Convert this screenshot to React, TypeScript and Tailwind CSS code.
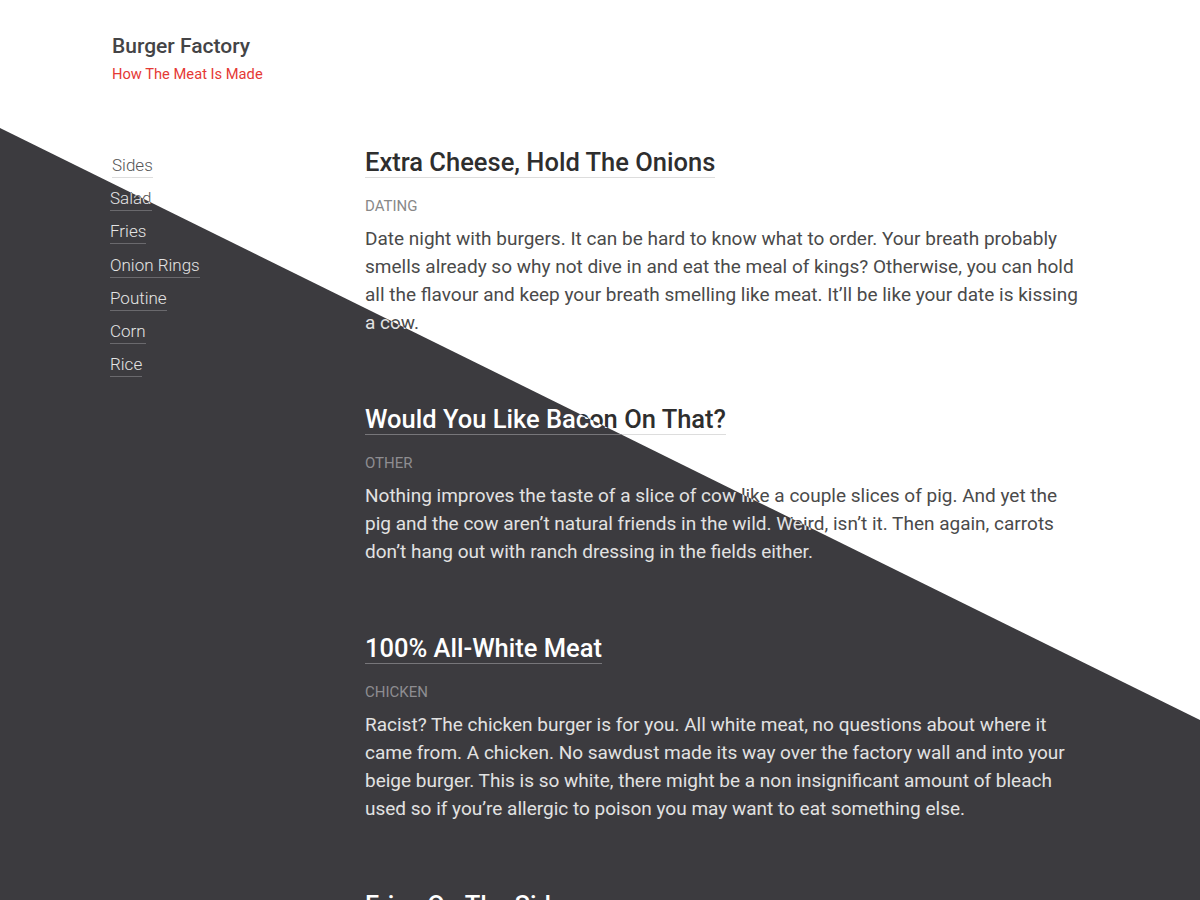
const nav = ["Sides", "Salad", "Fries", "Onion Rings", "Poutine", "Corn", "Rice"];

const posts = [
    {
        title: "Extra Cheese, Hold The Onions",
        tag: "Dating",
        body: "Date night with burgers. It can be hard to know what to order. Your breath probably smells already so why not dive in and eat the meal of kings? Otherwise, you can hold all the flavour and keep your breath smelling like meat. It\u2019ll be like your date is kissing a cow.",
    },
    {
        title: "Would You Like Bacon On That?",
        tag: "Other",
        body: "Nothing improves the taste of a slice of cow like a couple slices of pig. And yet the pig and the cow aren\u2019t natural friends in the wild. Weird, isn\u2019t it. Then again, carrots don\u2019t hang out with ranch dressing in the fields either.",
    },
    {
        title: "100% All-White Meat",
        tag: "Chicken",
        body: "Racist? The chicken burger is for you. All white meat, no questions about where it came from. A chicken. No sawdust made its way over the factory wall and into your beige burger. This is so white, there might be a non insignificant amount of bleach used so if you\u2019re allergic to poison you may want to eat something else.",
    },
    {
        title: "Fries On The Side",
        tag: "Sides",
        body: "Every burger deserves a friend. Fries are that friend.",
    },
];

const Page = ({dark}: {dark: boolean}) => {
    return (
        <div className="flex flex-col px-[110px] pt-[33px]">
            <div className="flex flex-col pl-[2px]">
                <h1 className={`text-[21px] leading-[26px] font-medium ${dark ? "text-white" : "text-[#444446]"}`}>
                    Burger Factory
                </h1>
                <p className="text-[14.7px] leading-[20px] mt-[5px] text-[#e53935]">How The Meat Is Made</p>
            </div>
            <div className="flex flex-row mt-[63px]">
                <ul className="flex flex-col w-[255px] shrink-0 pt-[7px] gap-[9.2px]">
                    {nav.map((item, i) => (
                        <li key={item}>
                            <a
                                className={`inline-block text-[17px] leading-[23px] font-light border-b ${i === 0 ? "ml-[2px]" : ""} ${
                                    dark ? "text-[#e4e4e4] border-[#6a696d]" : "text-[#555] border-[#ddd]"
                                }`}
                            >
                                {item}
                            </a>
                        </li>
                    ))}
                </ul>
                <div className="flex flex-col w-[720px] gap-[67px]">
                    {posts.map((post) => (
                        <article key={post.title} className="flex flex-col items-start">
                            <h2
                                className={`text-[25.5px] leading-[30px] font-medium border-b ${
                                    dark ? "text-white border-[#77767a]" : "text-[#2e2e2e] border-[#ddd]"
                                }`}
                            >
                                {post.title}
                            </h2>
                            <span className={`mt-[18px] text-[15px] leading-[20px] uppercase ${dark ? "text-[#8e8d91]" : "text-[#888]"}`}>
                                {post.tag}
                            </span>
                            <p className={`mt-[9px] text-[19px] leading-[28px] ${dark ? "text-[#e2e2e2]" : "text-[#4a4a4a]"}`}>
                                {post.body}
                            </p>
                        </article>
                    ))}
                </div>
            </div>
        </div>
    );
};

const App = () => {
    return (
        <div className="relative h-screen w-full overflow-hidden bg-white font-['Roboto',sans-serif]">
            <Page dark={false}/>
            <div className="absolute inset-0 bg-[#3c3b3f] [clip-path:polygon(0_128px,100%_720px,100%_100%,0_100%)]">
                <Page dark={true}/>
            </div>
        </div>
    );
};

export default App;
